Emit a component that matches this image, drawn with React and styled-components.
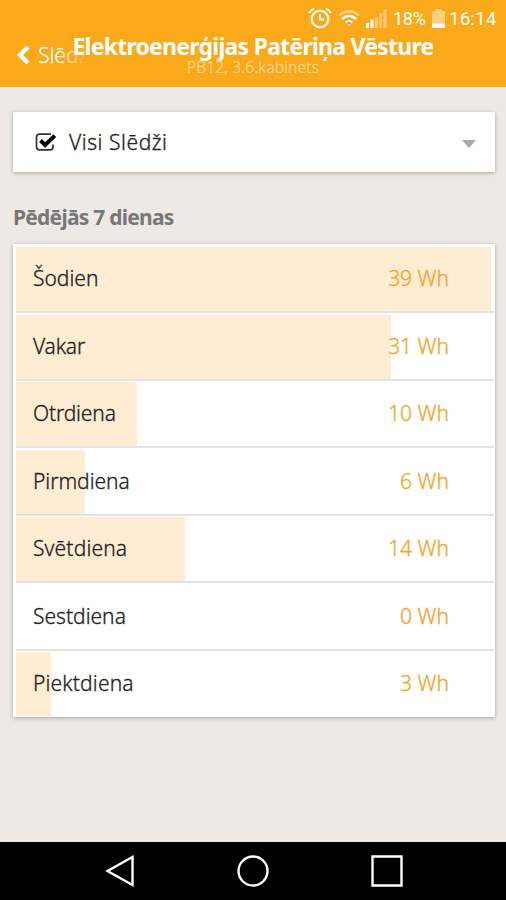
import React from 'react';
import styled, { createGlobalStyle } from 'styled-components';

const days = [
    { name: 'Šodien', value: 39, width: 475, tracking: 0 },
    { name: 'Vakar', value: 31, width: 375, tracking: -0.2 },
    { name: 'Otrdiena', value: 10, width: 121, tracking: -0.15 },
    { name: 'Pirmdiena', value: 6, width: 69, tracking: -0.05 },
    { name: 'Svētdiena', value: 14, width: 169, tracking: 0.15 },
    { name: 'Sestdiena', value: 0, width: 0, tracking: 0 },
    { name: 'Piektdiena', value: 3, width: 35, tracking: 0.15 },
];

const AlarmIcon = () => (
    <svg width="24" height="22" viewBox="0 0 24 22" fill="none" stroke="#fff" strokeWidth="2.1">
        <circle cx="12" cy="12" r="8.3" />
        <path d="M12 7v5.500h4M1.200 6.200Q2.500 3 6 1.800M22.800 6.200Q21.500 3 18 1.800" />
    </svg>
);

const WifiIcon = () => (
    <svg width="22" height="17" viewBox="0 0 22 17" fill="none" stroke="#fff" strokeWidth="2.2">
        <path d="M1 5.500Q11-3 21 5.500" opacity="0.5" />
        <path d="M4 9Q11 2.500 18 9" strokeWidth="2.600" />
        <path d="M7 11.600Q11 8.400 15 11.600L11 15.800Z" fill="#fff" stroke="none" />
        <path d="M8.500 12.300h5L11 15z" fill="#8d8a80" stroke="none" />
    </svg>
);

const SignalIcon = () => (
    <svg width="21" height="19" viewBox="0 0 21 19" fill="#fff">
        <path d="M0 14h3v5H0zM4.500 10.500h3V19h-3z" />
        <path d="M8.800 8h3v11h-3zM13.200 4h3v15h-3zM17.500 0h3v19h-3z" opacity="0.38" />
    </svg>
);

const BatteryIcon = () => (
    <svg width="13" height="19" viewBox="0 0 13 19" fill="#fff">
        <path d="M3.500 0h6v2H13v12.500H0V2h3.500z" opacity="0.45" />
        <path d="M0 14.500h13V19H0z" />
    </svg>
);

const ChevronIcon = () => (
    <svg width="14" height="20" viewBox="0 0 14 20" fill="none" stroke="#fff" strokeWidth="4.300">
        <path d="M12 2 4 10l8 8" />
    </svg>
);

const CheckIcon = () => (
    <svg width="22" height="20" viewBox="0 0 22 20" fill="none">
        <path d="M16 2.200H4.500Q1.500 2.200 1.500 5v10q0 2.800 3 2.800h10.500q3 0 3-2.800v-2.500" stroke="#333" strokeWidth="1.700" />
        <path d="M5.500 8.500 10.200 13 19.800 3.600" stroke="#000" strokeWidth="3.900" />
    </svg>
);

const App = () => (
    <>
        <GlobalStyle />
        <Screen>
            <Header>
                <StatusBar>
                    <AlarmIcon />
                    <WifiIcon />
                    <SignalIcon />
                    <BatteryLabel>18%</BatteryLabel>
                    <BatteryIcon />
                    <Clock>16:14</Clock>
                </StatusBar>
                <BackButton>
                    <ChevronIcon />
                    <BackLabel>Slēdži</BackLabel>
                </BackButton>
                <TitleBox>
                    <Title>Elektroenerģijas Patēriņa Vēsture</Title>
                    <Subtitle>PB12, 3.6.kabinets</Subtitle>
                </TitleBox>
            </Header>
            <Content>
                <SwitchSelect>
                    <CheckIcon />
                    <SelectLabel>Visi Slēdži</SelectLabel>
                    <Caret />
                </SwitchSelect>
                <SectionTitle>Pēdējās 7 dienas</SectionTitle>
                <DayList>
                    {days.map((day) => (
                        <DayRow key={day.name}>
                            <Bar style={{ width: day.width }} />
                            <DayInfo>
                                <DayName $tracking={day.tracking}>{day.name}</DayName>
                                <DayValue>{day.value} Wh</DayValue>
                            </DayInfo>
                        </DayRow>
                    ))}
                </DayList>
            </Content>
            <NavBar>
                <svg width="30" height="34" viewBox="0 0 30 34" fill="none" stroke="#fff" strokeWidth="2.400">
                    <path d="M27.500 3v28L2.500 17z" />
                </svg>
                <svg width="34" height="34" viewBox="0 0 34 34" fill="none" stroke="#fff" strokeWidth="2.400">
                    <circle cx="17" cy="17" r="14.500" />
                </svg>
                <svg width="34" height="34" viewBox="0 0 34 34" fill="none" stroke="#fff" strokeWidth="2.400">
                    <path d="M2.500 2.500h29v29h-29z" />
                </svg>
            </NavBar>
        </Screen>
    </>
);

const GlobalStyle = createGlobalStyle`
    body {
        margin: 0;
    }
    * {
        box-sizing: border-box;
    }
    svg {
        display: block;
        flex: none;
    }
`;

const Screen = styled.div`
    display: flex;
    flex-direction: column;
    width: 506px;
    height: 900px;
    overflow: hidden;
    background-color: #eee9e4;
    font-family: 'Noto Sans', sans-serif;
    font-weight: 300;
    white-space: nowrap;
`;

const Header = styled.header`
    display: grid;
    grid-template-rows: 33px 54px;
    height: 87px;
    background-color: #faa91b;
    color: #fff;
`;

const StatusBar = styled.div`
    display: flex;
    align-items: center;
    justify-content: flex-end;
    padding: 3px 9px 0 0;
    gap: 6px;
    font-family: Roboto, sans-serif;
    font-size: 18px;
    font-weight: 400;
`;

const BatteryLabel = styled.span`
    width: 33px;
    letter-spacing: -0.3px;
`;

const Clock = styled.span`
    width: 48px;
    margin-left: -2px;
    font-size: 19px;
`;

const BackButton = styled.div`
    grid-area: 2 / 1;
    display: flex;
    align-items: center;
    height: 43px;
    padding-left: 16px;
    gap: 8px;
`;

const BackLabel = styled.span`
    font-size: 21px;
    -webkit-text-stroke: 0.3px;
    mask-image: linear-gradient(to right, #000 18px, transparent 50px);
`;

const TitleBox = styled.div`
    grid-area: 2 / 1;
    display: flex;
    flex-direction: column;
    align-items: center;
`;

const Title = styled.h1`
    margin: 0;
    font-size: 23px;
    line-height: 26px;
    letter-spacing: -0.75px;
`;

const Subtitle = styled.div`
    font-size: 15.5px;
    line-height: 16px;
    letter-spacing: 0.2px;
    color: #fdd998;
    -webkit-text-stroke: 0.2px;
`;

const Content = styled.main`
    display: flex;
    flex-direction: column;
    flex: 1;
    padding: 25px 11px 0 13px;
`;

const SwitchSelect = styled.div`
    display: flex;
    align-items: center;
    height: 60px;
    padding: 0 19px 0 22px;
    background-color: #fff;
    box-shadow: 0 1px 4px rgba(0, 0, 0, 0.3);
    color: #222;
`;

const SelectLabel = styled.span`
    flex: 1;
    margin-left: 12px;
    font-size: 21px;
    letter-spacing: 0.55px;
    -webkit-text-stroke: 0.3px;
`;

const Caret = styled.div`
    border: 7px solid transparent;
    border-top: 8px solid #aaa;
    border-bottom: none;
    margin-top: 4px;
`;

const SectionTitle = styled.h2`
    margin: 30px 0 11px;
    font-size: 21px;
    line-height: 31px;
    letter-spacing: -0.75px;
    color: #777;
`;

const DayList = styled.div`
    height: 473px;
    padding: 3px 1px 0 3px;
    background-color: #fff;
    box-shadow: 0 1px 4px rgba(0, 0, 0, 0.3);
`;

const DayRow = styled.div`
    display: grid;
    height: 66px;
    margin-bottom: 1.5px;
    border-bottom: 2px solid #e5e3e1;
    &:last-child {
        height: 64px;
        margin: 0;
        border-bottom: none;
    }
`;

const Bar = styled.div`
    grid-area: 1 / 1;
    background-color: #feedd2;
`;

const DayInfo = styled.div`
    grid-area: 1 / 1;
    display: flex;
    align-items: center;
    justify-content: space-between;
    padding: 0 45px 2px 17px;
    font-size: 21px;
    -webkit-text-stroke: 0.3px;
`;

const DayName = styled.span`
    color: #222;
    letter-spacing: ${({ $tracking }) => $tracking}px;
`;

const DayValue = styled.span`
    color: #f5a42a;
`;

const NavBar = styled.nav`
    display: flex;
    align-items: center;
    justify-content: space-between;
    height: 58px;
    padding: 0 102px 0 105px;
    background-color: #000;
`;

export default App;
